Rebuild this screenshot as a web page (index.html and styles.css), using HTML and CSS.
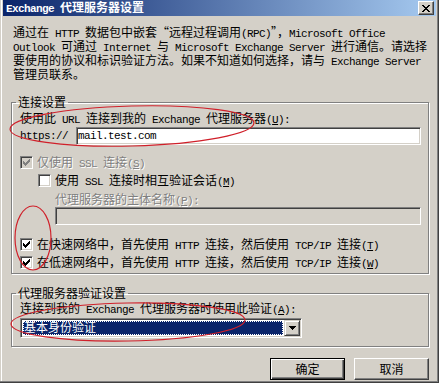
FILE: index.html
```html
<!DOCTYPE html>
<html lang="zh-CN">

<head>
    <meta charset="UTF-8">
    <title>Exchange 代理服务器设置</title>
    <link rel="stylesheet" href="styles.css">
</head>

<body>
    <div class="window">
        <!-- 标题栏 -->
        <div class="titlebar">
            <span class="title"><span class="en">Exchange </span>代理服务器设置</span>
            <span class="close-btn">
                <svg width="8" height="7" viewBox="0 0 8 7"><path d="M0 0h2v1h-2zM6 0h2v1h-2zM1 1h2v1h-2zM5 1h2v1h-2zM2 2h4v1h-4zM3 3h2v1h-2zM2 4h4v1h-4zM1 5h2v1h-2zM5 5h2v1h-2zM0 6h2v1h-2zM6 6h2v1h-2z" fill="#000"/></svg>
            </span>
        </div>

        <div class="content">
            <p class="intro">
                通过在<span class="en"> HTTP </span>数据包中嵌套“远程过程调用<span class="en">(RPC)</span>”，<span class="en">Microsoft Office</span><br>
                <span class="en">Outlook </span>可通过<span class="en"> Internet </span>与<span class="en"> Microsoft Exchange Server </span>进行通信。请选择<br>
                要使用的协议和标识验证方法。如果不知道如何选择，请与<span class="en"> Exchange Server</span><br>
                管理员联系。
            </p>

            <!-- 连接设置 -->
            <fieldset class="group group-conn">
                <legend>连接设置</legend>
                <div class="label">使用此<span class="en"> URL </span>连接到我的<span class="en"> Exchange </span>代理服务器<span class="en">(<u>U</u>):</span></div>
                <div class="url-row">
                    <span class="en">https://</span>
                    <div class="textbox url-box"><span class="en">mail.test.com</span></div>
                </div>
                <div class="check-row disabled">
                    <span class="checkbox">
                        <svg width="7" height="7" viewBox="0 0 7 7"><path d="M0 2H1V3H2V4H3V3H4V2H5V1H6V0H7V3H6V4H5V5H4V6H3V7H2V6H1V5H0Z"/></svg>
                    </span>
                    <span>仅使用<span class="en"> SSL </span>连接<span class="en">(<u>S</u>)</span></span>
                </div>
                <div class="check-row indent">
                    <span class="checkbox"></span>
                    <span>使用<span class="en"> SSL </span>连接时相互验证会话<span class="en">(<u>M</u>)</span></span>
                </div>
                <div class="label indent disabled">代理服务器的主体名称<span class="en">(<u>P</u>):</span></div>
                <div class="textbox name-box"></div>
                <div class="check-row fast">
                    <span class="checkbox">
                        <svg width="7" height="7" viewBox="0 0 7 7"><path d="M0 2H1V3H2V4H3V3H4V2H5V1H6V0H7V3H6V4H5V5H4V6H3V7H2V6H1V5H0Z"/></svg>
                    </span>
                    <span>在快速网络中，首先使用<span class="en"> HTTP </span>连接，然后使用<span class="en"> TCP/IP </span>连接<span class="en">(<u>T</u>)</span></span>
                </div>
                <div class="check-row">
                    <span class="checkbox">
                        <svg width="7" height="7" viewBox="0 0 7 7"><path d="M0 2H1V3H2V4H3V3H4V2H5V1H6V0H7V3H6V4H5V5H4V6H3V7H2V6H1V5H0Z"/></svg>
                    </span>
                    <span>在低速网络中，首先使用<span class="en"> HTTP </span>连接，然后使用<span class="en"> TCP/IP </span>连接<span class="en">(<u>W</u>)</span></span>
                </div>
            </fieldset>

            <!-- 代理服务器验证设置 -->
            <fieldset class="group group-auth">
                <legend>代理服务器验证设置</legend>
                <div class="label">连接到我的<span class="en"> Exchange </span>代理服务器时使用此验证<span class="en">(<u>A</u>):</span></div>
                <div class="combo">
                    <div class="combo-value"><span class="combo-sel">基本身份验证</span></div>
                    <span class="combo-btn">
                        <svg width="7" height="4" viewBox="0 0 7 4"><path d="M0 0h7v1h-1v1h-1v1h-1v1h-1v-1h-1v-1h-1v-1h-1z" fill="#000"/></svg>
                    </span>
                </div>
            </fieldset>

            <div class="buttons">
                <div class="btn default">确定</div>
                <div class="btn">取消</div>
            </div>
        </div>

        <!-- 红色手绘圈注 -->
        <svg class="marks" width="439" height="383" viewBox="0 0 439 383">
            <ellipse cx="132" cy="126" rx="122" ry="20" transform="rotate(-1.5 132 126)"/>
            <ellipse cx="33" cy="238" rx="18" ry="32"/>
            <ellipse cx="128" cy="322" rx="117" ry="19" transform="rotate(-1 128 322)"/>
        </svg>
    </div>
</body>

</html>
```

FILE: styles.css
```css
body {
    margin: 0;
    background: #d4d0c8;
}

p,
div,
span,
fieldset,
legend {
    padding: 0;
    margin: 0;
}

.window {
    position: relative;
    width: 439px;
    height: 383px;
    box-sizing: border-box;
    padding: 0 3px 3px 3px;
    background: #d4d0c8;
    box-shadow: inset -1px -1px #404040, inset -2px -2px #808080, inset 1px 0 #d4d0c8, inset 2px 0 #fff;
    font-family: "Noto Sans CJK SC", sans-serif;
    font-size: 12px;
    line-height: 12px;
    color: #000;
    overflow: hidden;
}

/* 英文部分用等宽字体，宽度为半个汉字 */
.en {
    font-family: "Liberation Mono", monospace;
    font-size: 11px;
    letter-spacing: -0.6px;
}

.titlebar {
    display: flex;
    align-items: center;
    justify-content: space-between;
    height: 16px;
    padding: 0 2px 0 3px;
    background: linear-gradient(90deg, #0a246a, #a6caf0);
    color: #fff;
    font-weight: bold;
    line-height: 14px;
}

.title .en {
    font-weight: bold;
}

.close-btn {
    display: flex;
    align-items: center;
    justify-content: center;
    width: 16px;
    height: 14px;
    box-sizing: border-box;
    background: #d4d0c8;
    border: 1px solid;
    border-color: #fff #404040 #404040 #fff;
    box-shadow: inset -1px -1px #808080;
}

.content {
    padding-top: 10px;
}

.intro {
    margin-left: 10px;
    white-space: nowrap;
}

.group {
    margin: 16px 7px 0 8px;
    padding: 4px 7px 4px 8px;
    border: 1px solid #808080;
    box-shadow: inset 1px 1px #fff, 1px 1px #fff;
    min-width: 0;
    white-space: nowrap;
}

.group legend {
    margin-left: -4px;
    padding: 0 2px;
    line-height: 12px;
}

.group-auth {
    margin-top: 13px;
    padding: 3px 7px 8px 8px;
}

.label {
    height: 12px;
}

.disabled {
    color: #808080;
    text-shadow: 1px 1px #fff;
}

.url-row {
    display: flex;
    align-items: center;
    gap: 8px;
    height: 18px;
    margin-top: 3px;
}

.textbox {
    display: flex;
    align-items: center;
    height: 18px;
    box-sizing: border-box;
    padding-left: 1px;
    background: #fff;
    border: 1px solid;
    border-color: #808080 #fff #fff #808080;
    box-shadow: inset 1px 1px #404040, inset -1px -1px #d4d0c8;
}

.url-box {
    width: 345px;
}

.name-box {
    width: 366px;
    margin: 2px 0 0 35px;
    background: #d4d0c8;
}

.check-row {
    display: flex;
    align-items: center;
    gap: 4px;
    height: 13px;
    margin-top: 5px;
}

.url-row + .check-row {
    margin-top: 11px;
}

.check-row.indent {
    padding-left: 18px;
}

.label.indent {
    margin-top: 6px;
    padding-left: 35px;
}

.check-row.fast {
    margin-top: 13px;
}

.checkbox {
    display: flex;
    align-items: center;
    justify-content: center;
    flex: none;
    width: 13px;
    height: 13px;
    box-sizing: border-box;
    background: #fff;
    border: 1px solid;
    border-color: #808080 #fff #fff #808080;
    box-shadow: inset 1px 1px #404040, inset -1px -1px #d4d0c8;
    fill: #000;
}

.disabled .checkbox {
    background: #d4d0c8;
    fill: #808080;
}

.combo {
    display: flex;
    width: 282px;
    height: 20px;
    margin-top: 4px;
    box-sizing: border-box;
    background: #fff;
    border: 1px solid;
    border-color: #808080 #fff #fff #808080;
    box-shadow: inset 1px 1px #404040, inset -1px -1px #d4d0c8;
    padding: 1px;
}

.combo-value {
    display: flex;
    flex: 1;
    padding: 1px;
}

.combo-sel {
    flex: 1;
    padding-left: 1px;
    background: #0a246a;
    color: #fff;
    outline: 1px dotted #fff;
    outline-offset: -1px;
    line-height: 12px;
}

.combo-btn {
    display: flex;
    align-items: center;
    justify-content: center;
    width: 16px;
    height: 16px;
    box-sizing: border-box;
    background: #d4d0c8;
    border: 1px solid;
    border-color: #d4d0c8 #404040 #404040 #d4d0c8;
    box-shadow: inset 1px 1px #fff, inset -1px -1px #808080;
}

.buttons {
    display: flex;
    justify-content: flex-end;
    gap: 9px;
    margin-top: 11px;
    padding-right: 7px;
}

.btn {
    display: flex;
    align-items: center;
    justify-content: center;
    width: 75px;
    height: 22px;
    box-sizing: border-box;
    border: 1px solid;
    border-color: #fff #404040 #404040 #fff;
    box-shadow: inset -1px -1px #808080, inset 1px 1px #d4d0c8;
}

.btn.default {
    border-color: #000;
    box-shadow: inset 1px 1px #fff, inset -1px -1px #404040, inset -2px -2px #808080;
}

.marks {
    position: absolute;
    top: 0;
    left: 0;
    pointer-events: none;
    fill: none;
    stroke: #d0202a;
    stroke-width: 1.2;
}
```
